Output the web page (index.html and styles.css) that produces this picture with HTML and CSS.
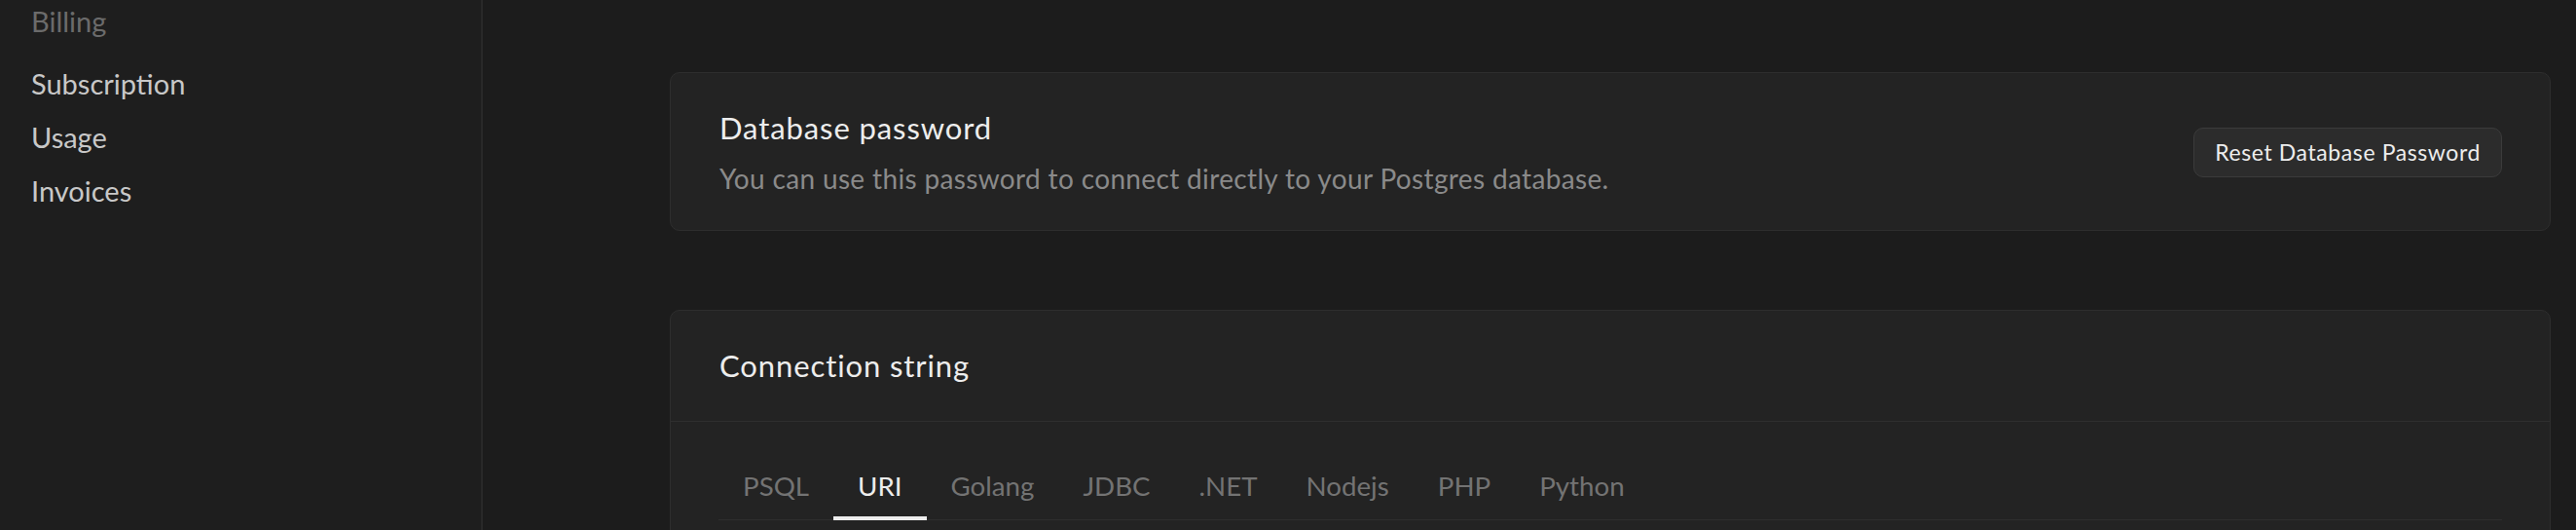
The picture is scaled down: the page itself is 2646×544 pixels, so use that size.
FILE: index.html
```html
<!DOCTYPE html>
<html lang="en">
<head>
<meta charset="utf-8">
<title>Database settings</title>
<link rel="stylesheet" href="styles.css">
</head>
<body>
<div class="layout">
  <aside class="sidebar">
    <div class="nav-heading">Billing</div>
    <nav class="nav-list">
      <a class="nav-item">Subscription</a>
      <a class="nav-item">Usage</a>
      <a class="nav-item">Invoices</a>
    </nav>
  </aside>
  <main class="main">
    <section class="card card-row">
      <div class="card-text">
        <h2 class="card-title">Database password</h2>
        <p class="card-desc">You can use this password to connect directly to your Postgres database.</p>
      </div>
      <button class="btn">Reset Database Password</button>
    </section>
    <section class="card card-tall">
      <header class="card-header">
        <h2 class="card-title">Connection string</h2>
      </header>
      <div class="card-body">
        <div class="tabs">
          <span class="tab">PSQL</span>
          <span class="tab active">URI</span>
          <span class="tab">Golang</span>
          <span class="tab">JDBC</span>
          <span class="tab">.NET</span>
          <span class="tab">Nodejs</span>
          <span class="tab">PHP</span>
          <span class="tab">Python</span>
        </div>
      </div>
    </section>
  </main>
</div>
</body>
</html>
```
FILE: styles.css
```css
* { box-sizing: border-box; }
html, body {
  margin: 0;
  padding: 0;
  background: #1c1c1c;
  font-family: "Lato", "Liberation Sans", sans-serif;
}
.layout {
  display: flex;
  height: 544px;
  overflow: hidden;
}
.sidebar {
  width: 496px;
  flex: none;
  background: #1e1e1e;
  border-right: 2px solid #292929;
  padding: 2px 0 0 32px;
}
.nav-heading {
  font-size: 29px;
  line-height: 40px;
  color: #6b6b6b;
}
.nav-list {
  display: flex;
  flex-direction: column;
  gap: 15px;
  margin-top: 24px;
}
.nav-item {
  font-size: 29px;
  line-height: 40px;
  color: #c8c8c8;
}
.main {
  flex: 1;
  padding: 74px 26px 0 192px;
  display: flex;
  flex-direction: column;
  gap: 81px;
}
.card {
  background: #232323;
  border: 1px solid #2e2e2e;
  border-radius: 10px;
}
.card-row {
  display: flex;
  align-items: center;
  justify-content: space-between;
  padding: 36px 49px 35px 50px;
}
.card-title {
  margin: 0;
  font-size: 31px;
  line-height: 40px;
  font-weight: 400;
  letter-spacing: 0.9px;
  color: #ededed;
}
.card-desc {
  margin: 14px 0 0;
  font-size: 28px;
  line-height: 36px;
  letter-spacing: 0.35px;
  color: #8a8a8a;
}
.btn {
  font-family: inherit;
  font-size: 23px;
  letter-spacing: 0.6px;
  line-height: 49px;
  height: 51px;
  padding: 0 21px;
  color: #ededed;
  background: #2c2c2c;
  border: 1px solid #3b3b3b;
  border-radius: 10px;
}
.card-tall {
  height: 400px;
  flex: none;
}
.card-header {
  padding: 36px 50px 37px;
  border-bottom: 1px solid #2e2e2e;
}
.card-body {
  padding: 48px 49px 0 49px;
}
.tabs {
  display: flex;
  border-bottom: 1px solid #2e2e2e;
}
.tab {
  font-size: 27.7px;
  line-height: 36px;
  padding: 0 25px 13px;
  color: #737373;
  border-bottom: 4px solid transparent;
  margin-bottom: -1px;
}
.tab.active {
  color: #ededed;
  border-bottom-color: #ededed;
}
```
